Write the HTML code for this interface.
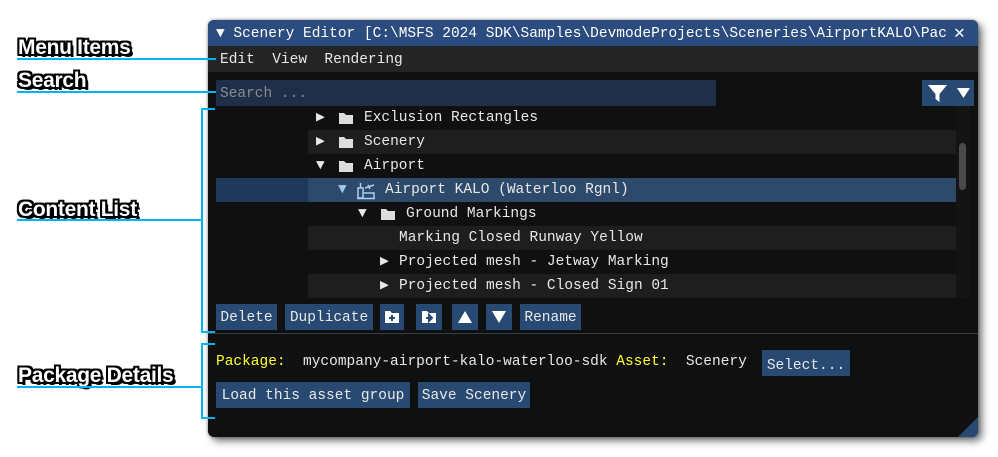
<!DOCTYPE html>
<html><head><meta charset="utf-8"><style>
*{margin:0;padding:0;box-sizing:border-box}
body{width:998px;height:457px;background:#fff;position:relative;overflow:hidden;font-family:"Liberation Mono",monospace;font-size:14.5px;color:#e8e8e8}
.a{position:absolute}
.win{left:208px;top:20px;width:770px;height:417px;background:#101010;border-radius:6px;box-shadow:4px 4px 8px rgba(0,0,0,.55),0 0 3px rgba(0,0,0,.4);overflow:hidden}
.t{white-space:pre;line-height:28px}
.btn{background:#284a72;height:26px;line-height:28px;color:#e8e8e8;white-space:pre;text-align:center}
.lbl{font-family:"Liberation Sans",sans-serif;font-weight:bold;font-size:21px;color:#fff;letter-spacing:-0.3px;
text-shadow:-2px 0 #000,2px 0 #000,0 -2px #000,0 2px #000,-2px -2px #000,2px 2px #000,-2px 2px #000,2px -2px #000,3px 3px #000}
.bl{background:#00b4f0}
.row{position:absolute;left:92px;width:648px;height:24px}
.fd{position:absolute}
</style></head><body>
<div class="a win">
 <div class="a" style="left:0;top:0;width:770px;height:26px;background:#2b4c7e"></div>
 <div class="a t" style="left:8px;top:0px;color:#fff">▼ Scenery Editor [C:\MSFS 2024 SDK\Samples\DevmodeProjects\Sceneries\AirportKALO\Pac</div>
 <div class="a" style="left:746px;top:5px;color:#fff;font-size:18px;line-height:18px">✕</div>
 <div class="a" style="left:0;top:26px;width:770px;height:26px;background:#242424"></div>
 <div class="a t" style="left:12px;top:26px">Edit  View  Rendering</div>
 <div class="a" style="left:8px;top:60px;width:500px;height:26px;background:#1f2f4a"></div>
 <div class="a t" style="left:12px;top:60px;color:#8a8a8a">Search ...</div>
 <div class="a" style="left:714px;top:60px;width:52px;height:26px;background:#284a72"></div>
 <svg class="a" style="left:716px;top:62px" width="50" height="22"><path d="M4 3h19l-7.5 9v8l-4-3v-5z" fill="#fff"/><path d="M33 6h13l-6.5 10z" fill="#fff"/></svg>
 <div class="a" style="left:8px;top:86px;width:740px;height:192px;overflow:hidden">
  <div class="row" style="top:24px;background:#1e1e1e"></div>
  <div class="a" style="left:0;top:72px;width:92px;height:24px;background:#20385a"></div>
  <div class="row" style="top:72px;background:#2e4a6a"></div>
  <div class="row" style="top:120px;background:#1e1e1e"></div>
  <div class="row" style="top:168px;background:#1e1e1e"></div>

  <div class="a t" style="left:100px;top:-2px">▶</div>
  <svg class="fd" style="left:122px;top:5px" width="16" height="14"><path d="M1 2h5l2 2h7v9H1z" fill="#ddd"/></svg>
  <div class="a t" style="left:148px;top:-2px">Exclusion Rectangles</div>

  <div class="a t" style="left:100px;top:22px">▶</div>
  <svg class="fd" style="left:122px;top:29px" width="16" height="14"><path d="M1 2h5l2 2h7v9H1z" fill="#ddd"/></svg>
  <div class="a t" style="left:148px;top:22px">Scenery</div>

  <div class="a t" style="left:100px;top:46px">▼</div>
  <svg class="fd" style="left:122px;top:53px" width="16" height="14"><path d="M1 2h5l2 2h7v9H1z" fill="#ddd"/></svg>
  <div class="a t" style="left:148px;top:46px">Airport</div>

  <div class="a t" style="left:122px;top:70px;color:#9ccaf0">▼</div>
  <svg class="a" style="left:140px;top:75px" width="20" height="19"><g fill="none" stroke="#a8d0f0" stroke-width="1.5"><rect x="2" y="7" width="5" height="10"/><path d="M4.5 2v5M1 17.5h18M7 12h11v6M9 7l9-3M12 4l2 4"/></g></svg>
  <div class="a t" style="left:169px;top:70px">Airport KALO (Waterloo Rgnl)</div>

  <div class="a t" style="left:142px;top:94px">▼</div>
  <svg class="fd" style="left:164px;top:101px" width="16" height="14"><path d="M1 2h5l2 2h7v9H1z" fill="#ddd"/></svg>
  <div class="a t" style="left:190px;top:94px">Ground Markings</div>

  <div class="a t" style="left:183px;top:118px">Marking Closed Runway Yellow</div>
  <div class="a t" style="left:164px;top:142px">▶</div>
  <div class="a t" style="left:183px;top:142px">Projected mesh - Jetway Marking</div>
  <div class="a t" style="left:164px;top:166px">▶</div>
  <div class="a t" style="left:183px;top:166px">Projected mesh - Closed Sign 01</div>
 </div>
 <div class="a" style="left:748px;top:86px;width:14px;height:192px;background:#141414"></div>
 <div class="a" style="left:751px;top:123px;width:7px;height:47px;background:#4a4a4a;border-radius:4px"></div>
 <div class="a btn" style="left:8px;top:284px;width:61px">Delete</div>
 <div class="a btn" style="left:77px;top:284px;width:88px">Duplicate</div>
 <div class="a btn" style="left:172px;top:284px;width:24px"></div>
 <svg class="a" style="left:176px;top:290px" width="16" height="14"><path d="M1 1h5l2 2h7v10H1z" fill="#fff"/><path d="M8 5v6M5 8h6" stroke="#284a72" stroke-width="2"/></svg>
 <div class="a btn" style="left:208px;top:284px;width:26px"></div>
 <svg class="a" style="left:213px;top:290px" width="16" height="14"><path d="M1 1h5l2 2h7v10H1z" fill="#fff"/><path d="M5 8h4M8 5l3 3-3 3z" stroke="#284a72" stroke-width="2" fill="#284a72"/></svg>
 <div class="a btn" style="left:244px;top:284px;width:26px"></div>
 <svg class="a" style="left:249px;top:290px" width="16" height="14"><path d="M8 1l7 12H1z" fill="#fff"/></svg>
 <div class="a btn" style="left:278px;top:284px;width:26px"></div>
 <svg class="a" style="left:283px;top:290px" width="16" height="14"><path d="M1 1h14L8 13z" fill="#fff"/></svg>
 <div class="a btn" style="left:312px;top:284px;width:61px">Rename</div>
 <div class="a" style="left:0;top:313px;width:770px;height:1px;background:#3a3a44"></div>
 <div class="a t" style="left:8px;top:328px"><span style="color:#ffff30">Package:</span>  mycompany-airport-kalo-waterloo-sdk <span style="color:#ffff30">Asset:</span>  Scenery</div>
 <div class="a btn" style="left:554px;top:330px;width:88px;line-height:32px">Select...</div>
 <div class="a btn" style="left:8px;top:362px;width:194px">Load this asset group</div>
 <div class="a btn" style="left:210px;top:362px;width:112px">Save Scenery</div>
 <svg class="a" style="left:750px;top:397px" width="20" height="20"><path d="M20 0V20H0z" fill="#284a72"/></svg>
</div>
<div class="a lbl" style="left:18px;top:36px">Menu Items</div>
<div class="a bl" style="left:17px;top:58px;width:199px;height:2px"></div>
<div class="a lbl" style="left:18px;top:69px">Search</div>
<div class="a bl" style="left:17px;top:91px;width:199px;height:2px"></div>
<div class="a lbl" style="left:18px;top:198px">Content List</div>
<div class="a bl" style="left:17px;top:219px;width:186px;height:2px"></div>
<div class="a bl" style="left:201px;top:108px;width:2px;height:225px"></div>
<div class="a bl" style="left:201px;top:108px;width:14px;height:2px"></div>
<div class="a bl" style="left:201px;top:331px;width:14px;height:2px"></div>
<div class="a lbl" style="left:18px;top:364px">Package Details</div>
<div class="a bl" style="left:17px;top:386px;width:186px;height:2px"></div>
<div class="a bl" style="left:201px;top:343px;width:2px;height:76px"></div>
<div class="a bl" style="left:201px;top:343px;width:14px;height:2px"></div>
<div class="a bl" style="left:201px;top:417px;width:14px;height:2px"></div>
</body></html>
